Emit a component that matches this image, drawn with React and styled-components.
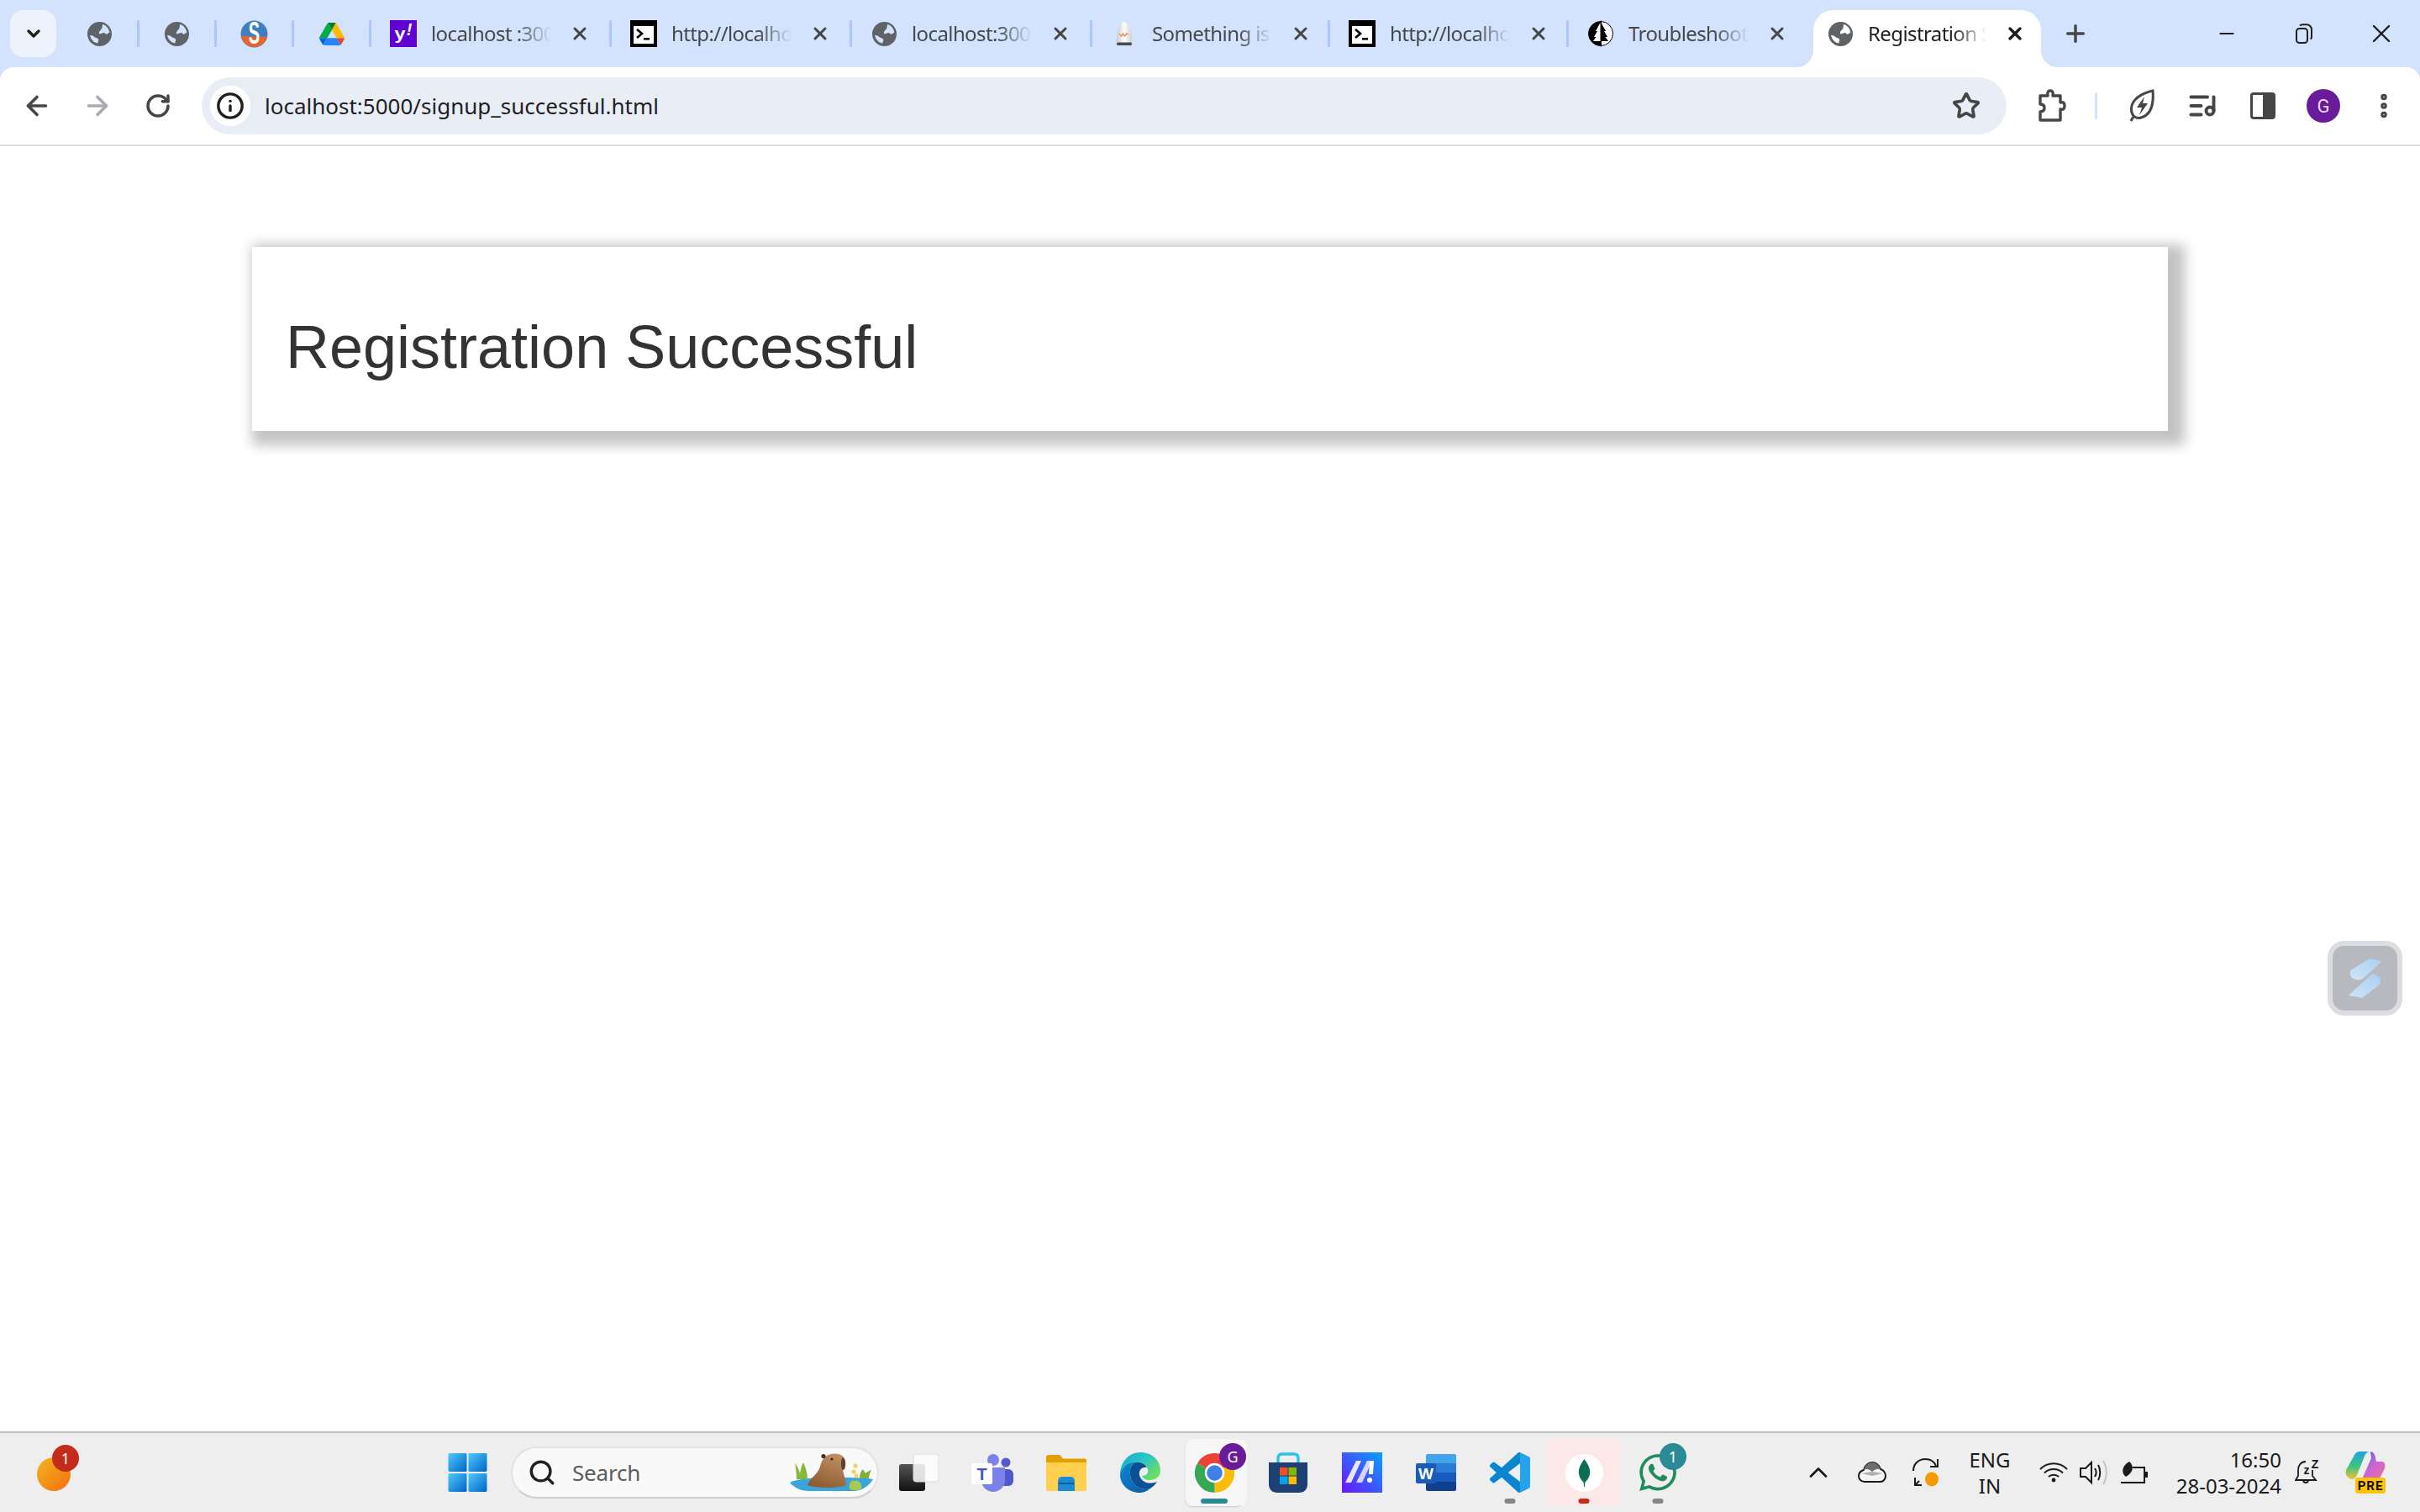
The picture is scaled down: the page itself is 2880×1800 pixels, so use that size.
import React from 'react';
import styled, { createGlobalStyle } from 'styled-components';
import { ArrowLeft, ArrowRight, RotateCw, Star, Info, ChevronDown, ChevronUp, Plus, X, Minus, MoreVertical, Search as SearchGlyph, ListMusic } from 'lucide-react';
import { FaWhatsapp } from 'react-icons/fa';

const UI_FONT = '"Noto Sans", "Open Sans", sans-serif';

const GlobalStyle = createGlobalStyle`
  html, body { margin: 0; padding: 0; background: #fff; }
  #root { width: 2880px; height: 1800px; overflow: hidden; }
`;

const Page = styled.div`
  display: flex;
  flex-direction: column;
  width: 2880px;
  height: 1800px;
  font-family: ${UI_FONT};
`;

const BrowserHeader = styled.header`
  flex: none;
  background: #d3e3fd;
`;

const TabStrip = styled.div`
  display: flex;
  align-items: center;
  height: 80px;
  padding-left: 12px;
`;

const TabSearchButton = styled.div`
  flex: none;
  display: flex;
  align-items: center;
  justify-content: center;
  width: 55px;
  height: 56px;
  margin-right: 7px;
  border-radius: 16px;
  background: #edf2fc;
  color: #1f1f1f;
`;

const PinnedTab = styled.div`
  flex: none;
  display: flex;
  align-items: center;
  justify-content: center;
  width: 89px;
  height: 56px;
`;

const Tab = styled.div`
  flex: none;
  display: flex;
  align-items: center;
  width: ${p => p.$width || 283}px;
  height: 56px;
  padding-left: 22px;
  box-sizing: border-box;
`;

const ActiveTab = styled.div`
  position: relative;
  flex: none;
  display: flex;
  align-items: center;
  align-self: flex-end;
  width: 271px;
  height: 68px;
  padding: 0 0 12px 16px;
  box-sizing: border-box;
  background: #fff;
  border-radius: 24px 24px 0 0;

  &::before, &::after {
    content: '';
    position: absolute;
    bottom: 0;
    width: 20px;
    height: 20px;
  }
  &::before {
    left: -20px;
    background: radial-gradient(circle at 0 0, #d3e3fd 19.5px, #fff 20.5px);
  }
  &::after {
    right: -20px;
    background: radial-gradient(circle at 100% 0, #d3e3fd 19.5px, #fff 20.5px);
  }
`;

const TabSeparator = styled.div`
  flex: none;
  width: 3px;
  height: 32px;
  border-radius: 2px;
  background: #a8c7fa;
`;

const FaviconBox = styled.div`
  flex: none;
  display: flex;
  align-items: center;
  justify-content: center;
  width: 32px;
`;

const TabTitle = styled.div`
  flex: none;
  width: ${p => p.$width || 143}px;
  margin-left: 17px;
  overflow: hidden;
  white-space: nowrap;
  font-size: 24px;
  letter-spacing: -0.6px;
  line-height: 34px;
  color: ${p => (p.$active ? '#1f1f1f' : '#46484b')};
  -webkit-mask-image: linear-gradient(to right, #000 72%, transparent 100%);
  mask-image: linear-gradient(to right, #000 72%, transparent 100%);
`;

const TabClose = styled.div`
  flex: none;
  display: flex;
  align-items: center;
  justify-content: center;
  width: 68px;
  color: ${p => (p.$active ? '#1f1f1f' : '#444746')};
`;

const NewTab = styled.div`
  flex: none;
  display: flex;
  align-items: center;
  justify-content: center;
  width: 82px;
  color: #444746;
`;

const WindowControls = styled.div`
  display: flex;
  margin-left: auto;
`;

const WindowButton = styled.div`
  display: flex;
  align-items: center;
  justify-content: center;
  width: 92px;
  height: 80px;
  color: #1f1f1f;
`;

const Toolbar = styled.div`
  display: flex;
  align-items: center;
  height: 92px;
  padding-left: 8px;
  background: #fff;
  border-radius: 16px 16px 0 0;
  border-bottom: 2px solid #dfdfdf;
`;

const ToolButton = styled.div`
  flex: none;
  display: flex;
  align-items: center;
  justify-content: center;
  width: 72px;
  height: 72px;
  color: ${p => p.$color || '#444746'};
`;

const Omnibox = styled.div`
  flex: none;
  display: flex;
  align-items: center;
  width: 2148px;
  height: 68px;
  margin: 0 18px 0 16px;
  padding: 0 12px 0 10px;
  box-sizing: border-box;
  border-radius: 34px;
  background: #e9edf6;
`;

const InfoBadge = styled.div`
  flex: none;
  display: flex;
  align-items: center;
  justify-content: center;
  width: 48px;
  height: 48px;
  border-radius: 50%;
  background: #fff;
  color: #1f1f1f;
`;

const UrlText = styled.div`
  flex: 1;
  margin-left: 17px;
  font-size: 26px;
  color: #1f1f1f;
`;

const BookmarkStar = styled.div`
  display: flex;
  margin-right: 19px;
  color: #444746;
`;

const ToolbarDivider = styled.div`
  flex: none;
  width: 3px;
  height: 32px;
  margin: 0 17px 0 15px;
  border-radius: 2px;
  background: #d3e3fd;
`;

const Avatar = styled.div`
  display: flex;
  align-items: center;
  justify-content: center;
  width: 40px;
  height: 40px;
  border-radius: 50%;
  background: #6a1b9a;
  color: #e9d8f2;
  font-family: Roboto, sans-serif;
  font-size: 22px;
`;

const Content = styled.main`
  position: relative;
  flex: 1;
  padding: 120px 300px 0;
  background: #fff;
`;

const Card = styled.section`
  height: 219px;
  padding: 79px 40px 0;
  box-sizing: border-box;
  background: #fff;
  box-shadow: 10px 7px 14px 10px rgba(0, 0, 0, 0.24);
`;

const Heading = styled.h1`
  margin: 0;
  font-family: "Liberation Sans", Arial, sans-serif;
  font-size: 72px;
  font-weight: 400;
  line-height: 80px;
  color: #333;
`;

const FloatingWidget = styled.div`
  position: absolute;
  top: 946px;
  right: 21px;
  display: flex;
  align-items: center;
  justify-content: center;
  width: 89px;
  height: 89px;
  box-sizing: border-box;
  border: 6px solid #dcdde1;
  border-radius: 20px;
  background: #b8b9be;
`;

const Taskbar = styled.footer`
  flex: none;
  display: flex;
  align-items: center;
  height: 94px;
  border-top: 2px solid #bfbfbf;
  background: #eee;
`;

const NotifyArea = styled.div`
  flex: none;
  width: 512px;
  padding-left: 44px;
  box-sizing: border-box;
`;

const NotifyBubble = styled.div`
  position: relative;
  width: 40px;
  height: 40px;
  margin-top: 4px;
  border-radius: 50%;
  background: linear-gradient(135deg, #f3b51f, #f36f10);
`;

const CountBadge = styled.div`
  position: absolute;
  top: ${p => p.$top}px;
  left: ${p => p.$left}px;
  display: flex;
  align-items: center;
  justify-content: center;
  width: 32px;
  height: 32px;
  border-radius: 50%;
  background: ${p => p.$color};
  color: #fff;
  font-family: ${UI_FONT};
  font-size: 18px;
`;

const TaskSlot = styled.div`
  position: relative;
  flex: none;
  display: flex;
  align-items: center;
  justify-content: center;
  width: ${p => p.$width || 88}px;
  height: 80px;
  box-sizing: border-box;
  background: ${p => p.$bg || 'transparent'};
  border-radius: 8px;
`;

const SearchBox = styled.div`
  flex: none;
  display: flex;
  align-items: center;
  width: 438px;
  height: 62px;
  margin: 0 3px 0 8px;
  padding: 0 5px 0 18px;
  box-sizing: border-box;
  border: 2px solid #e2e2e2;
  border-bottom-color: #cfcfcf;
  border-radius: 31px;
  background: #f9f9f9;
  color: #1f1f1f;
`;

const SearchLabel = styled.span`
  flex: 1;
  margin-left: 19px;
  font-size: 26px;
  letter-spacing: -0.2px;
  color: #5c5c5c;
`;

const Indicator = styled.div`
  position: absolute;
  bottom: 3px;
  left: 50%;
  width: ${p => p.$width || 13}px;
  height: 6px;
  border-radius: 3px;
  transform: translateX(-50%);
  background: ${p => p.$color || '#858585'};
`;

const ActiveApp = styled.div`
  position: relative;
  display: flex;
  align-items: center;
  justify-content: center;
  width: 68px;
  height: 80px;
  border-radius: 8px;
  background: #f6f6f6;
  box-shadow: 6px 0 0 -1px #f6f6f6, 0 1px 2px rgba(0, 0, 0, 0.15);
`;

const Tray = styled.div`
  display: flex;
  align-items: center;
  margin-left: 115px;
  color: #1a1a1a;
`;

const LangBox = styled.div`
  flex: none;
  width: 88px;
  margin-right: 8px;
  font-size: 24px;
  line-height: 31px;
  text-align: center;
`;

const Clock = styled.div`
  flex: none;
  width: 151px;
  font-size: 24px;
  line-height: 31px;
  text-align: right;
`;

function Globe({ bg = '#d3e3fd' }) {
  return (
    <svg width="29" height="29" viewBox="0 0 28 28">
      <circle cx="14" cy="14" r="14" fill="#5f6368" />
      <path fill={bg} d="M17.5 3C21.5 4 25 8 25.4 12.4L21.5 14.5C20.4 12.5 18.5 12 16.6 13.2L13.8 14C12.8 11.5 14.5 9.8 16 8.6C17.4 7.3 17 5 17.5 3Z" />
      <path fill={bg} d="M3 15.5C5.5 15.3 7.5 16.6 9 18.2C10.6 18.4 12.4 19 12.8 21L11.8 24.6C7.5 24 3.8 20.2 3 15.5Z" />
    </svg>
  );
}

function TerminalIcon() {
  return (
    <svg width="32" height="32" viewBox="0 0 32 32">
      <rect width="32" height="32" fill="#000" />
      <rect x="4" y="7" width="24" height="21" fill="#fff" />
      <path d="M8 11l6 5-6 5" fill="none" stroke="#000" strokeWidth="2.6" />
      <rect x="16" y="21" width="7" height="2.6" fill="#000" />
    </svg>
  );
}

function YahooIcon() {
  return (
    <svg width="32" height="32" viewBox="0 0 32 32">
      <rect width="32" height="32" fill="#5f01d1" />
      <text x="12" y="23" textAnchor="middle" fontFamily="Liberation Sans" fontWeight="700" fontSize="21" fill="#fff" textLength="13" lengthAdjust="spacingAndGlyphs">y</text>
      <text x="23" y="18" textAnchor="middle" fontFamily="Liberation Sans" fontWeight="700" fontStyle="italic" fontSize="20" fill="#fff">!</text>
    </svg>
  );
}

function SmashingIcon() {
  return (
    <svg width="33" height="33" viewBox="0 0 32 32">
      <circle cx="16" cy="16" r="15.5" fill="#3d7fc0" />
      <path d="M0.8 19C8 16 22 22 31.2 18A15.5 15.5 0 0 1 0.8 19Z" fill="#e5652f" />
      <text x="16" y="27.5" textAnchor="middle" fontFamily="Liberation Sans" fontWeight="700" fontSize="35" fill="#fff" textLength="13" lengthAdjust="spacingAndGlyphs">S</text>
    </svg>
  );
}

function DriveIcon() {
  return (
    <svg width="30" height="27" viewBox="0 0 87.3 78">
      <path d="m6.6 66.85 3.85 6.65c.8 1.4 1.95 2.5 3.3 3.3l13.75-23.8h-27.5c0 1.55.4 3.1 1.2 4.5z" fill="#0066da" />
      <path d="m43.65 25-13.75-23.8c-1.35.8-2.5 1.9-3.3 3.3l-25.4 44a9.06 9.06 0 0 0 -1.2 4.5h27.5z" fill="#00ac47" />
      <path d="m73.55 76.8c1.35-.8 2.5-1.9 3.3-3.3l1.6-2.75 7.65-13.25c.8-1.4 1.2-2.95 1.2-4.5h-27.502l5.852 11.5z" fill="#ea4335" />
      <path d="m43.65 25 13.75-23.8c-1.35-.8-2.9-1.2-4.5-1.2h-18.5c-1.6 0-3.15.45-4.5 1.2z" fill="#00832d" />
      <path d="m59.8 53h-32.3l-13.75 23.8c1.35.8 2.9 1.2 4.5 1.2h50.8c1.6 0 3.15-.45 4.5-1.2z" fill="#2684fc" />
      <path d="m73.4 26.5-12.7-22c-.8-1.4-1.95-2.5-3.3-3.3l-13.75 23.8 16.15 28h27.45c0-1.55-.4-3.1-1.2-4.5z" fill="#ffba00" />
    </svg>
  );
}

function EggIcon() {
  return (
    <svg width="22" height="28" viewBox="0 0 22 28">
      <defs>
        <linearGradient id="egg" x1="0" x2="1">
          <stop offset="0" stopColor="#c9c9c9" />
          <stop offset="0.5" stopColor="#fdfdfd" />
          <stop offset="1" stopColor="#cfcfcf" />
        </linearGradient>
      </defs>
      <path d="M11 0C17 0 20.5 14 20.5 25H1.5C1.5 14 5 0 11 0Z" fill="url(#egg)" />
      <rect x="2" y="24.5" width="18" height="3.5" rx="1.6" fill="#4a4a4a" />
      <path d="M5 14l2.5 3 2-3 2 3 2.4-3 2 1" fill="none" stroke="#e8762c" strokeWidth="1.1" />
    </svg>
  );
}

function TreeIcon() {
  return (
    <svg width="30" height="32" viewBox="0 0 30 32">
      <circle cx="15" cy="16" r="14.5" fill="#fff" stroke="#000" strokeWidth="1" />
      <path d="M15 1.5A14.5 14.5 0 0 0 15 30.5Z" fill="#000" />
      <path d="M14.5 3L9 13h2L7 20h2.5L6 25h8.5Z" fill="#fff" />
      <path d="M15.5 3L21 13h-2L23 20h-2.5L24 25h-8.5Z" fill="#000" />
      <rect x="15" y="0.5" width="1" height="31" fill="#000" />
    </svg>
  );
}

function RestoreIcon() {
  return (
    <svg width="22" height="24" viewBox="0 0 22 24" fill="none" stroke="#1f1f1f" strokeWidth="2">
      <rect x="2" y="6" width="13" height="17" rx="3.5" />
      <path d="M6 2.5C7 1.5 8 1.2 9.5 1.2h4.5c3.3 0 6 2.7 6 6v8c0 1.4-.4 2.6-1.2 3.4" />
    </svg>
  );
}

function ExtensionIcon() {
  return (
    <svg width="34" height="40" viewBox="0 0 34 40" fill="none" stroke="#444746" strokeWidth="3.4" strokeLinejoin="round">
      <path d="M3 8H12C11 3 13 2 15 2S19 3 18 8H27V16C31 15 32 17 32 20S31 25 27 24V37H3V27C7 27 8 25 8 22.5S7 18 3 18Z" />
    </svg>
  );
}

function LeafBoltIcon() {
  return (
    <svg width="30" height="40" viewBox="0 0 30 40" fill="none" stroke="#444746" strokeWidth="3">
      <path d="M28 2C29 14 28 30 14 34C7 36 2 31 2.5 23C3 12 15 5 28 2Z" />
      <path d="M2 38C3 36 4 34 6 32" />
      <path d="M18 9L9 22h6l-3 9 10-14h-6Z" fill="#444746" stroke="none" />
    </svg>
  );
}

function SidePanelIcon() {
  return (
    <svg width="30" height="32" viewBox="0 0 30 32">
      <rect x="1.5" y="1.5" width="27" height="29" rx="2.5" fill="#fff" stroke="#444746" strokeWidth="3" />
      <rect x="15" y="1.5" width="13.5" height="29" fill="#444746" />
    </svg>
  );
}

function ShieldLogo() {
  return (
    <svg width="40" height="48" viewBox="0 0 40 48">
      <defs>
        <linearGradient id="wid" x1="0" y1="1" x2="1" y2="0">
          <stop offset="0" stopColor="#cfe4f8" />
          <stop offset="1" stopColor="#a9d0f2" />
        </linearGradient>
      </defs>
      <path d="M25 0L40 3L17 24C13 27 8 26 4 23C1 20 1 16 3 14Z" fill="url(#wid)" />
      <path d="M26 20C30 17 34 20 37 23C39 26 38 30 36 32L16 47L0 44Z" fill="url(#wid)" />
    </svg>
  );
}

function OrangeDot() {
  return <NotifyBubble><CountBadge $top={-15} $left={18} $color="#c42b1c">1</CountBadge></NotifyBubble>;
}

function WindowsLogo() {
  const cells = [[0, 0], [24.5, 0], [0, 24.5], [24.5, 24.5]];
  return (
    <svg width="47" height="46" viewBox="0 0 47 47">
      <defs>
        <linearGradient id="win" x1="0" y1="0" x2="1" y2="1">
          <stop offset="0" stopColor="#4fcbfb" />
          <stop offset="1" stopColor="#0063c7" />
        </linearGradient>
      </defs>
      {cells.map(([x, y]) => <rect key={`${x}-${y}`} x={x} y={y} width="22.5" height="22.5" rx="1.5" fill="url(#win)" />)}
    </svg>
  );
}

function Capybara() {
  return (
    <svg width="100" height="46" viewBox="0 0 100 46">
      <defs>
        <linearGradient id="capy" x1="0.7" y1="0" x2="0.3" y2="1">
          <stop offset="0" stopColor="#bd8f62" />
          <stop offset="1" stopColor="#8e5b31" />
        </linearGradient>
      </defs>
      <path d="M1 35C10 30 30 29 50 29C70 29 90 29 100 31C96 38 88 44 78 45H24C14 45 6 41 1 35Z" fill="#3aa5dc" />
      <path d="M9 31C9 24 8 18 7 12C10 16 12 20 13 24C14 19 15 14 17 11C20 17 22 24 22 31Z" fill="#86b83f" />
      <path d="M84 30C84 25 85 22 88 19C89 21 90 22 91 24C93 22 95 21 98 20C96 24 95 27 95 30Z" fill="#7fb13a" />
      <path d="M22 38C24 30 34 26 37 16C39 8 42 3 50 1C58 -1 66 2 67 9C68 14 67 18 64 21C66 28 68 33 68 38C62 42 30 42 22 38Z" fill="url(#capy)" />
      <path d="M64 5C67 7 68 13 66 19C64 21 62 19 62 14C62 10 62 7 64 5Z" fill="#5b4036" />
      <circle cx="41" cy="3.5" r="2.6" fill="#4a3222" />
      <circle cx="51" cy="7" r="1.5" fill="#33202b" />
      <path d="M72 42C71 37 73 34 76 32C78 34 79 34 80 32C84 33 87 37 86 42C82 45 76 45 72 42Z" fill="#a9c94f" />
      <circle cx="79" cy="15" r="2.6" fill="#f5cf62" />
      <circle cx="77" cy="22" r="2.6" fill="#f5cf62" />
      <circle cx="80" cy="27" r="2.4" fill="#f5cf62" />
    </svg>
  );
}

function TaskViewIcon() {
  return (
    <svg width="47" height="44" viewBox="0 0 47 44">
      <defs>
        <linearGradient id="tv" x1="0" y1="0" x2="0" y2="1">
          <stop offset="0" stopColor="#555" />
          <stop offset="1" stopColor="#111" />
        </linearGradient>
      </defs>
      <rect x="0" y="12" width="31" height="32" rx="3" fill="url(#tv)" />
      <rect x="17" y="0" width="30" height="33" rx="3" fill="#fdfdfd" fillOpacity="0.86" stroke="#d8d8d8" />
    </svg>
  );
}

function TeamsIcon() {
  return (
    <svg width="50" height="45" viewBox="0 0 50 45">
      <circle cx="41" cy="10" r="5.5" fill="#5059c9" />
      <rect x="33" y="18" width="17" height="20" rx="6" fill="#5059c9" />
      <circle cx="26" cy="7" r="7" fill="#7b83eb" />
      <path d="M12 16H40V32C40 39 33 45 26 45S12 39 12 32Z" fill="#7b83eb" />
      <rect x="0" y="11" width="25" height="25" rx="2" fill="#fff" />
      <text x="12.5" y="31" textAnchor="middle" fontFamily="Liberation Sans" fontWeight="700" fontSize="20" fill="#4b53bc">T</text>
    </svg>
  );
}

function FolderIcon() {
  return (
    <svg width="48" height="43" viewBox="0 0 48 43">
      <path d="M0 3C0 1 1 0 3 0H15C17 0 18 2 20 4.5H46C47 4.5 48 5 48 6.5V12H0Z" fill="#e0a100" />
      <path d="M0 9H48V41C48 42 47 43 46 43H2C1 43 0 42 0 41Z" fill="#ffcf4d" />
      <path d="M14 43V32C14 28 16 26 19 26H29C32 26 34 28 34 32V43Z" fill="#1b8bd6" />
      <rect x="15" y="33" width="18" height="2" fill="#0f5c98" />
    </svg>
  );
}

function EdgeIcon() {
  return (
    <svg width="48" height="48" viewBox="0 0 48 48">
      <defs>
        <linearGradient id="edgeA" x1="0" y1="0" x2="1" y2="0.6">
          <stop offset="0" stopColor="#17a6d8" />
          <stop offset="0.6" stopColor="#2cc9c0" />
          <stop offset="1" stopColor="#6fdc62" />
        </linearGradient>
        <linearGradient id="edgeB" x1="0" y1="0" x2="1" y2="1">
          <stop offset="0" stopColor="#0f87d4" />
          <stop offset="1" stopColor="#0c59a4" />
        </linearGradient>
      </defs>
      <path d="M24 0C38 0 48 9 48 22C48 30 41 33 35 33C31 33 27 31 26 28C32 28 34 24 33 20C31 13 24 10 17 12C8 14 3 20 0 27C0 12 10 0 24 0Z" fill="url(#edgeA)" />
      <path d="M0 27C2 17 11 11 18 12C13 15 11 20 12 27C13 38 24 47 36 43C31 47 27 48 23 48C10 48 0 38 0 27Z" fill="url(#edgeB)" />
      <path d="M18 12C25 11 30 14 32 18C26 17 22 21 23 27C25 35 33 39 44 35C42 38 39 41 36 43C24 47 13 38 12 27C11 20 13 15 18 12Z" fill="#0b4f94" />
    </svg>
  );
}

function ChromeIcon() {
  return (
    <svg width="47" height="47" viewBox="0 0 48 48">
      <path d="M24 24L3.2 12A24 24 0 0 1 44.8 12Z" fill="#ea4335" />
      <path d="M24 24L44.8 12A24 24 0 0 1 24 48Z" fill="#fbbc04" />
      <path d="M24 24L24 48A24 24 0 0 1 3.2 12Z" fill="#34a853" />
      <circle cx="24" cy="24" r="12" fill="#fff" />
      <circle cx="24" cy="24" r="9.5" fill="#3f7fe8" />
    </svg>
  );
}

function StoreIcon() {
  return (
    <svg width="46" height="48" viewBox="0 0 46 48">
      <path d="M11 12V7C11 3 13 2 16 2H30C33 2 35 3 35 7V12" fill="none" stroke="#27c4ee" strokeWidth="3.4" />
      <path d="M0 12H46V38C46 44 42 48 36 48H10C4 48 0 44 0 38Z" fill="#1d3f74" />
      <rect x="13" y="18" width="9.5" height="9.5" fill="#f25022" />
      <rect x="23.5" y="18" width="9.5" height="9.5" fill="#7fba00" />
      <rect x="13" y="28.5" width="9.5" height="9.5" fill="#00a4ef" />
      <rect x="23.5" y="28.5" width="9.5" height="9.5" fill="#ffb900" />
    </svg>
  );
}

function MeshIcon() {
  return (
    <svg width="48" height="48" viewBox="0 0 48 48">
      <defs>
        <linearGradient id="mesh" x1="0" y1="1" x2="1" y2="0">
          <stop offset="0" stopColor="#6a14ff" />
          <stop offset="1" stopColor="#08a2ff" />
        </linearGradient>
      </defs>
      <rect width="48" height="48" fill="url(#mesh)" />
      <path d="M4 36L17 10H23L11 36Z" fill="#e9e4ff" />
      <path d="M17 36L30 10H36L24 36Z" fill="#d9d4ff" />
      <path d="M33 10H38L37 26H32Z" fill="#fff" />
      <circle cx="33" cy="33" r="3" fill="#fff" />
    </svg>
  );
}

function WordIcon() {
  return (
    <svg width="48" height="44" viewBox="0 0 48 44">
      <path d="M12 2C12 1 13 0 14 0H46C47 0 48 1 48 2V11H12Z" fill="#41a5ee" />
      <rect x="12" y="11" width="36" height="11" fill="#2b7cd3" />
      <rect x="12" y="22" width="36" height="11" fill="#185abd" />
      <path d="M12 33H48V42C48 43 47 44 46 44H14C13 44 12 43 12 42Z" fill="#103f91" />
      <rect x="0" y="11" width="24" height="24" rx="2" fill="#1a5bb8" />
      <text x="12" y="30" textAnchor="middle" fontFamily="Liberation Sans" fontWeight="700" fontSize="19" fill="#fff">W</text>
    </svg>
  );
}

function VsCodeIcon() {
  return (
    <svg width="48" height="48" viewBox="0 0 24 24">
      <path d="M23.15 2.587L18.21.21a1.494 1.494 0 0 0-1.705.29l-9.46 8.63-4.12-3.128a.999.999 0 0 0-1.276.057L.327 7.261A1 1 0 0 0 .326 8.74L3.899 12 .326 15.26a1 1 0 0 0 .001 1.479L1.65 17.94a.999.999 0 0 0 1.276.057l4.12-3.128 9.46 8.63a1.492 1.492 0 0 0 1.704.29l4.942-2.377A1.5 1.5 0 0 0 24 20.06V3.939a1.5 1.5 0 0 0-.85-1.352zm-5.146 14.861L10.826 12l7.178-5.448v10.896z" fill="#0a85cf" />
      <path d="M18 0.1L23.15 2.587A1.5 1.5 0 0 1 24 3.94V20.06a1.5 1.5 0 0 1-.85 1.353L18 23.9Z" fill="#25a4ee" />
    </svg>
  );
}

function MongoIcon() {
  return (
    <svg width="45" height="45" viewBox="0 0 45 45">
      <circle cx="22.5" cy="22.5" r="22.5" fill="#fff" />
      <path d="M22.5 6C27 12 30 18 29 24C28 29 25 32 23.2 34L23 39H22L21.7 34C20 32 17 29 16 24C15 18 18 12 22.5 6Z" fill="#0d6e55" />
    </svg>
  );
}

function TrayCloud() {
  return (
    <svg width="34" height="26" viewBox="0 0 34 26" stroke="#1a1a1a" strokeWidth="2">
      <path d="M8 24C3 24 1 20 1 17C1 13 4 11 7 10C8 5 12 1 17 1C22 1 25 4 27 9C31 10 33 14 33 17C33 21 30 24 27 24Z" fill="#f4f4f4" />
      <path d="M7 10C10 8 14 9 17 12C20 9 24 8 27 9C25 4 22 1 17 1C12 1 8 5 7 10Z" fill="#6d6d6d" stroke="none" />
      <path d="M4 14L17 12L30 14L17 17Z" fill="#b0b0b0" stroke="none" />
    </svg>
  );
}

function TraySync() {
  return (
    <svg width="34" height="36" viewBox="0 0 34 36" fill="none" stroke="#1a1a1a" strokeWidth="2">
      <path d="M2 16C2 8 8 2 16 2C22 2 27 5 29 10" />
      <path d="M31 2V11H22" />
      <path d="M4 24V33H12" />
      <path d="M4 33C7 30 8 29 9 28" />
      <ellipse cx="24" cy="26" rx="8" ry="8.5" fill="#f59b00" stroke="none" />
    </svg>
  );
}

function TrayWifi() {
  return (
    <svg width="34" height="24" viewBox="0 0 34 24" fill="none" stroke="#1a1a1a" strokeWidth="2">
      <path d="M1 8C10 -1 24 -1 33 8" />
      <path d="M6 12.5C12 6.5 22 6.5 28 12.5" />
      <path d="M11 17C14 14 20 14 23 17" />
      <circle cx="17" cy="21" r="2.4" fill="#1a1a1a" stroke="none" />
    </svg>
  );
}

function TraySpeaker() {
  return (
    <svg width="34" height="30" viewBox="0 0 34 30" fill="none" stroke="#1a1a1a" strokeWidth="2">
      <path d="M1 10H7L14 3V27L7 20H1Z" />
      <path d="M18 10C20 13 20 17 18 20" />
      <path d="M22 6C25 11 25 19 22 24" />
      <path d="M28 1C33 9 33 21 28 29" stroke="#c4c4c4" />
    </svg>
  );
}

function TrayBattery() {
  return (
    <svg width="32" height="26" viewBox="0 0 32 26" fill="none" stroke="#1a1a1a" strokeWidth="2">
      <path d="M14 7H28V25H0" />
      <path d="M9 7V12" />
      <rect x="28.5" y="12" width="3.5" height="7" fill="#1a1a1a" stroke="none" />
      <path d="M10 0C16 5 15 13 6 18C0 14 1 5 10 0Z" fill="#1a1a1a" stroke="none" />
    </svg>
  );
}

function TrayBell() {
  return (
    <svg width="30" height="32" viewBox="0 0 30 32" fill="none" stroke="#1a1a1a" strokeWidth="1.8">
      <path d="M13 3C7 3 4 8 4 13V20L1 25H25L21 20V13" />
      <path d="M10 25C10 29 16 29 16 25" />
      <text x="14" y="18" fontFamily="Liberation Sans" fontWeight="700" fontSize="14" fill="#1a1a1a" stroke="none" textAnchor="middle">z</text>
      <text x="24" y="11" fontFamily="Liberation Sans" fontWeight="700" fontSize="14" fill="#1a1a1a" stroke="none" textAnchor="middle">Z</text>
    </svg>
  );
}

function CopilotIcon() {
  return (
    <svg width="48" height="50" viewBox="0 0 48 50">
      <defs>
        <linearGradient id="copA" x1="0" y1="0" x2="0" y2="1">
          <stop offset="0" stopColor="#1fa2e8" />
          <stop offset="0.55" stopColor="#3dc47a" />
          <stop offset="1" stopColor="#f2c531" />
        </linearGradient>
        <linearGradient id="copB" x1="0" y1="0" x2="1" y2="1">
          <stop offset="0" stopColor="#1f63d8" />
          <stop offset="0.5" stopColor="#c866d6" />
          <stop offset="1" stopColor="#f36f9b" />
        </linearGradient>
      </defs>
      <path d="M10 6C12 2 14 0 18 0H30C26 0 24 2 22 8L14 28C12 33 8 34 5 32C1 30 0 26 1 22Z" fill="url(#copA)" />
      <path d="M30 0C33 0 35 3 36 7L37 12H44C47 12 48 16 47 20L42 30C40 34 36 36 31 36H16C20 34 21 30 23 26L31 8Z" fill="url(#copB)" />
      <rect x="12" y="31" width="36" height="19" rx="3" fill="#ffc300" />
      <text x="30" y="46" textAnchor="middle" fontFamily="Roboto" fontWeight="700" fontSize="15" letterSpacing="1" fill="#111">PRE</text>
    </svg>
  );
}

function WhatsAppApp() {
  return (
    <>
      <FaWhatsapp size={50} color="#1f8c5b" />
      <CountBadge $top={5} $left={46} $color="#2a8a96">1</CountBadge>
    </>
  );
}

const PINNED = [<Globe key="a" />, <Globe key="b" />, <SmashingIcon key="c" />, <DriveIcon key="d" />];

const TABS = [
  { icon: <YahooIcon />, title: 'localhost :3000/' },
  { icon: <TerminalIcon />, title: 'http://localhost' },
  { icon: <Globe />, title: 'localhost:3000/' },
  { icon: <EggIcon />, title: 'Something is wrong', width: 280 },
  { icon: <TerminalIcon />, title: 'http://localhost', width: 281 },
  { icon: <TreeIcon />, title: 'Troubleshooting', width: 291 },
];

const APPS = [
  { icon: <TaskViewIcon /> },
  { icon: <TeamsIcon /> },
  { icon: <FolderIcon /> },
  { icon: <EdgeIcon /> },
  {
    icon: (
      <ActiveApp>
        <ChromeIcon />
        <CountBadge $top={5} $left={40} $color="#6a1b9a">G</CountBadge>
        <Indicator $width={32} $color="#2a8a96" />
      </ActiveApp>
    ),
  },
  { icon: <StoreIcon /> },
  { icon: <MeshIcon /> },
  { icon: <WordIcon /> },
  { icon: <VsCodeIcon />, dot: '#858585' },
  { icon: <MongoIcon />, dot: '#c42b1c', bg: '#fde8e8' },
  { icon: <WhatsAppApp />, dot: '#858585' },
];

export default function App() {
  return (
    <Page>
      <GlobalStyle />
      <BrowserHeader>
        <TabStrip>
          <TabSearchButton><ChevronDown size={24} strokeWidth={3.4} /></TabSearchButton>
          {PINNED.map(icon => (
            <React.Fragment key={icon.key}>
              <PinnedTab>{icon}</PinnedTab>
              <TabSeparator />
            </React.Fragment>
          ))}
          {TABS.map((tab, i) => (
            <React.Fragment key={i}>
              <Tab $width={tab.width}>
                <FaviconBox>{tab.icon}</FaviconBox>
                <TabTitle>{tab.title}</TabTitle>
                <TabClose><X size={24} strokeWidth={3} /></TabClose>
              </Tab>
              {i < TABS.length - 1 && <TabSeparator />}
            </React.Fragment>
          ))}
          <ActiveTab>
            <FaviconBox><Globe bg="#fff" /></FaviconBox>
            <TabTitle $active $width={141}>Registration Successful</TabTitle>
            <TabClose $active><X size={24} strokeWidth={3.4} /></TabClose>
          </ActiveTab>
          <NewTab><Plus size={32} strokeWidth={2.6} /></NewTab>
          <WindowControls>
            <WindowButton><Minus size={26} strokeWidth={2} /></WindowButton>
            <WindowButton><RestoreIcon /></WindowButton>
            <WindowButton><X size={36} strokeWidth={1.6} /></WindowButton>
          </WindowControls>
        </TabStrip>
        <Toolbar>
          <ToolButton><ArrowLeft size={36} strokeWidth={2.4} /></ToolButton>
          <ToolButton $color="#a8abae"><ArrowRight size={36} strokeWidth={2.4} /></ToolButton>
          <ToolButton><RotateCw size={32} strokeWidth={2.6} /></ToolButton>
          <Omnibox>
            <InfoBadge><Info size={34} strokeWidth={2.4} /></InfoBadge>
            <UrlText>localhost:5000/signup_successful.html</UrlText>
            <BookmarkStar><Star size={34} strokeWidth={2.6} /></BookmarkStar>
          </Omnibox>
          <ToolButton><ExtensionIcon /></ToolButton>
          <ToolbarDivider />
          <ToolButton><LeafBoltIcon /></ToolButton>
          <ToolButton><ListMusic size={36} strokeWidth={2.6} /></ToolButton>
          <ToolButton><SidePanelIcon /></ToolButton>
          <ToolButton><Avatar>G</Avatar></ToolButton>
          <ToolButton><MoreVertical size={36} strokeWidth={3} /></ToolButton>
        </Toolbar>
      </BrowserHeader>
      <Content>
        <Card>
          <Heading>Registration Successful</Heading>
        </Card>
        <FloatingWidget><ShieldLogo /></FloatingWidget>
      </Content>
      <Taskbar>
        <NotifyArea><OrangeDot /></NotifyArea>
        <TaskSlot><WindowsLogo /></TaskSlot>
        <SearchBox>
          <SearchGlyph size={34} strokeWidth={2.4} />
          <SearchLabel>Search</SearchLabel>
          <Capybara />
        </SearchBox>
        {APPS.map((app, i) => (
          <TaskSlot key={i} $bg={app.bg}>
            {app.icon}
            {app.dot && <Indicator $color={app.dot} />}
          </TaskSlot>
        ))}
        <Tray>
          <TaskSlot $width={64}><ChevronUp size={36} strokeWidth={1.8} /></TaskSlot>
          <TaskSlot $width={64}><TrayCloud /></TaskSlot>
          <TaskSlot $width={64}><TraySync /></TaskSlot>
          <LangBox>ENG<br />IN</LangBox>
          <TaskSlot $width={48}><TrayWifi /></TaskSlot>
          <TaskSlot $width={48}><TraySpeaker /></TaskSlot>
          <TaskSlot $width={48}><TrayBattery /></TaskSlot>
          <Clock>16:50<br />28-03-2024</Clock>
          <TaskSlot $width={61}><TrayBell /></TaskSlot>
          <TaskSlot $width={78}><CopilotIcon /></TaskSlot>
        </Tray>
      </Taskbar>
    </Page>
  );
}
